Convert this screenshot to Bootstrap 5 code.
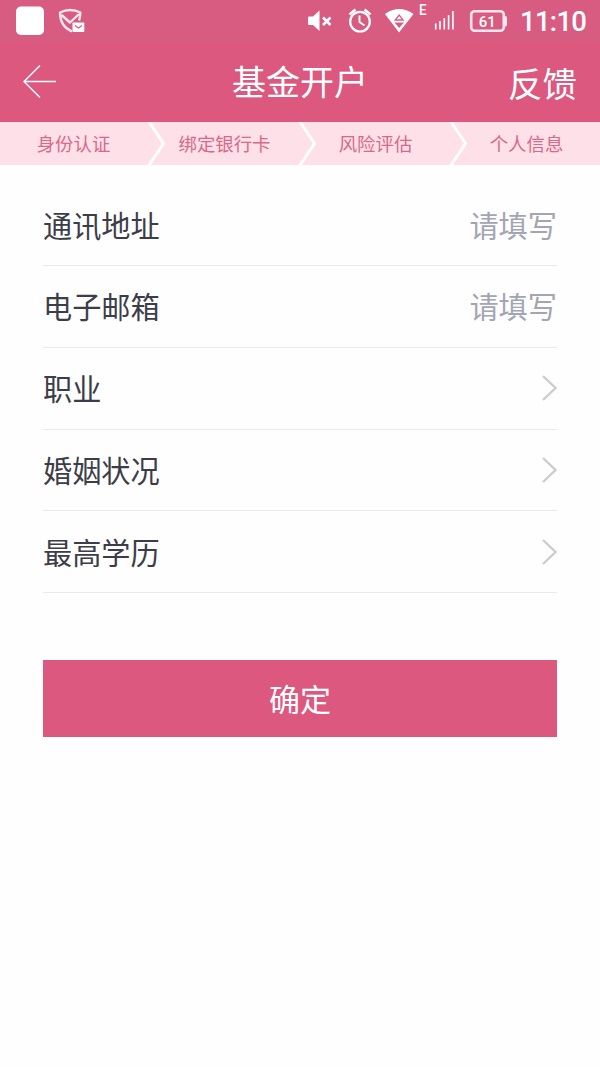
<!DOCTYPE html>
<html lang="zh-CN">
<head>
<meta charset="utf-8">
<meta name="viewport" content="width=device-width, initial-scale=1">
<title>基金开户</title>
<link href="https://cdn.jsdelivr.net/npm/bootstrap@5.3.0/dist/css/bootstrap.min.css" rel="stylesheet">
<style>
  body { font-family: "Noto Sans CJK SC", sans-serif; color: #3c3d49; background: #fefefe; line-height: 1; }
  svg { display: block; flex: none; }
  .status-bar { height: 42px; background: #d85c81; font-family: Roboto, sans-serif; }
  .app-bar { height: 80px; background: #dc587e; padding: 0 23px; }
  .app-bar > * { flex: 1 1 0; }
  .app-title { font-size: 34px; line-height: 78px; height: 80px; }
  .feedback { font-size: 34.5px; line-height: 80px; height: 80px; }
  .steps { height: 43px; background: #fde0e8; color: #d9688a; font-size: 18.4px; }
  .step-item { width: 151px; height: 43px; flex: none; }
  .step-item span { flex: none; width: 147px; text-align: center; line-height: 43px; }
  .form-rows { margin: 19.300px 43px 0; font-size: 29.2px; }
  .form-row { height: 81.75px; border-bottom: 1.5px solid #ebebeb; color: inherit; }
  .form-row span { padding-bottom: 1px; }
  .hint { color: #a4a5b2; }
  .submit { height: 77px; margin: 67px 43px 0; background: #dc587e; font-size: 31px; line-height: 75px; }
  .submit span { display: block; height: 77px; }
</style>
</head>
<body>
<header class="text-white">
  <div class="status-bar">
    <svg width="600" height="42" viewBox="0 0 600 42" fill="none" stroke="#fff">
      <rect x="16" y="6.500" width="28" height="28.500" rx="5" fill="#fff" stroke="none"/>
      <g stroke="#fde6ed" stroke-width="2.400" stroke-linejoin="round">
        <path d="M72 31.500C65 28.500 60 22 60 12.500Q65 10 70 10Q75.500 10 80.300 12.500Q80.300 17 79 20.500"/>
        <path d="M61.500 15L70 22.500L79 14"/>
      </g>
      <rect x="72.500" y="22.500" width="11.800" height="9.500" rx=".8" fill="#fff" stroke="none"/>
      <path d="M75 25.500L78.500 28L82 25.500" stroke="#d85c81" stroke-width="1.200"/>
      <path d="M309 16.500H313L319.500 10.500V31L313 25H309Q308 25 308 24V17.500Q308 16.500 309 16.500Z" fill="#fff" stroke="none"/>
      <path d="M323 17.500L330.500 25M330.500 17.500L323 25" stroke-width="2.500"/>
      <circle cx="360" cy="21.700" r="9.800" stroke-width="2.200"/>
      <path d="M349.500 14.500L355.500 9.500M364.500 9.500L370.500 14.500" stroke-width="2.500"/>
      <path d="M359.500 15.500V22L364.500 25.500" stroke-width="1.900"/>
      <path d="M385 14Q399 4 413.500 14L399 32.500Z" fill="#fff" stroke="none"/>
      <path d="M395.300 20L399.200 15L403.100 20Z" stroke="#d85c81" stroke-width="1.300"/>
      <path d="M394.500 22.500H404L399.200 28Z" fill="#d85c81" stroke="none"/>
      <text x="419" y="14.800" font-size="15.500" font-weight="500" textLength="7.500" lengthAdjust="spacingAndGlyphs" fill="#fff" stroke="none">E</text>
      <path d="M435.700 23.500V29.500M440 21V29.500M444.300 18V29.500M448.600 15V29.500M452.900 11V29.500" stroke-width="1.600"/>
      <rect x="471.200" y="11.200" width="32.600" height="19.600" rx="3.500" stroke="#fde6ed" stroke-width="2.600"/>
      <path d="M504.500 16H505.500Q507 16 507 18V24.500Q507 26.500 505.500 26.500H504.500Z" fill="#fde6ed" stroke="none"/>
      <text x="487.300" y="26.800" font-size="15" font-weight="500" text-anchor="middle" fill="#fff" stroke="none">61</text>
      <text x="520" y="31" font-size="27.500" font-weight="500" textLength="67" fill="#fff" stroke="none">11:10</text>
    </svg>
  </div>
  <nav class="app-bar d-flex align-items-center">
    <a href="#" aria-label="返回">
      <svg width="34" height="34" viewBox="0 0 34 34" fill="none" stroke="#fff" stroke-width="1.500"><path d="M17 .5L1 16.500L17 32.500M1 16.500H33"/></svg>
    </a>
    <div class="app-title text-center text-nowrap">基金开户</div>
    <div class="feedback text-end">反馈</div>
  </nav>
</header>

<div class="steps d-flex overflow-hidden">
  <div class="step-item d-flex"><span>身份认证</span><svg width="20" height="43" viewBox="0 0 20 43" fill="none" stroke="#fff" stroke-width="3"><path d="M1.500 -1L16.500 21.500L1.500 44"/></svg></div>
  <div class="step-item d-flex"><span>绑定银行卡</span><svg width="20" height="43" viewBox="0 0 20 43" fill="none" stroke="#fff" stroke-width="3"><path d="M1.500 -1L16.500 21.500L1.500 44"/></svg></div>
  <div class="step-item d-flex"><span>风险评估</span><svg width="20" height="43" viewBox="0 0 20 43" fill="none" stroke="#fff" stroke-width="3"><path d="M1.500 -1L16.500 21.500L1.500 44"/></svg></div>
  <div class="step-item d-flex"><span>个人信息</span></div>
</div>

<main>
  <div class="form-rows">
    <div class="form-row d-flex align-items-center justify-content-between"><span>通讯地址</span><span class="hint">请填写</span></div>
    <div class="form-row d-flex align-items-center justify-content-between"><span>电子邮箱</span><span class="hint">请填写</span></div>
    <div class="form-row d-flex align-items-center justify-content-between"><span>职业</span><svg width="15" height="26" viewBox="0 0 15 26" fill="none" stroke="#ccc" stroke-width="2.300"><path d="M1 1L13.500 13L1 25"/></svg></div>
    <div class="form-row d-flex align-items-center justify-content-between"><span>婚姻状况</span><svg width="15" height="26" viewBox="0 0 15 26" fill="none" stroke="#ccc" stroke-width="2.300"><path d="M1 1L13.500 13L1 25"/></svg></div>
    <div class="form-row d-flex align-items-center justify-content-between"><span>最高学历</span><svg width="15" height="26" viewBox="0 0 15 26" fill="none" stroke="#ccc" stroke-width="2.300"><path d="M1 1L13.500 13L1 25"/></svg></div>
  </div>
  <div class="d-grid">
    <button type="button" class="submit btn rounded-0 border-0 p-0 text-white"><span>确定</span></button>
  </div>
</main>
<script src="https://cdn.jsdelivr.net/npm/bootstrap@5.3.0/dist/js/bootstrap.bundle.min.js"></script>
</body>
</html>
